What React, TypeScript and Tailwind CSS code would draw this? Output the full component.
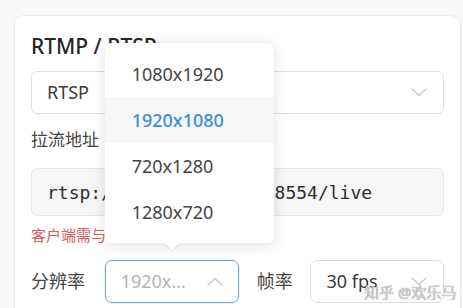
import * as React from 'react';

const font = "font-['Noto_Sans','Noto_Sans_CJK_SC',sans-serif]";

const Chevron: React.FC<{ up?: boolean }> = ({ up }) => (
  <svg width="16" height="9" viewBox="0 0 16 9" fill="none" className="shrink-0">
    <path
      d={up ? 'M1 8L8 1.5L15 8' : 'M1 1L8 7.5L15 1'}
      stroke="#c4c4c4"
      strokeWidth="1.2"
      strokeLinecap="round"
      strokeLinejoin="round"
    />
  </svg>
);

const options = ['1080x1920', '1920x1080', '720x1280', '1280x720'];

const App: React.FC = () => {
  return (
    <div className={`relative w-[463px] h-[308px] overflow-hidden bg-[#f8f8f8] pt-[15px] pl-[14px] pr-[2px] ${font}`}>
      <div className="h-[400px] rounded-[10px] border border-[#ebebeb] bg-white px-[16px] pt-[16px] text-[#333]">
        <h2 className="text-[21px] leading-[28px] font-medium text-[#262626]">RTMP / RTSP</h2>

        <div className="mt-[11px] flex h-[43px] items-center justify-between rounded-[6px] border border-[#dedede] pl-[15px] pr-[16px]">
          <span className="text-[18px] text-[#3a3a3a]">RTSP</span>
          <Chevron />
        </div>

        <div className="mt-[14px] text-[17px] leading-[24px] text-[#444]">拉流地址</div>

        <div className="mt-[16px] flex h-[48px] items-center rounded-[6px] border border-[#e6e6e6] bg-[#f6f6f6] pl-[15px]">
          <span className="font-['DejaVu_Sans_Mono',monospace] text-[18px] text-[#2e2e2e]">rtsp://192.168.1.100:8554/live</span>
        </div>

        <div className="mt-[9px] text-[15px] leading-[21px] text-[#d46060]">客户端需与设备处于同一局域网</div>

        <div className="mt-[14px] flex items-center">
          <span className="w-[74px] text-[18px] text-[#444]">分辨率</span>
          <div className="relative">
            <div className="flex h-[43px] w-[134px] items-center justify-between rounded-[7px] border border-[#79a8c6] pl-[15px] pr-[15px] shadow-[0_0_0_1px_rgba(121,168,198,0.15)]">
              <span className="text-[18px] text-[#b4b4b4]">1920x…</span>
              <Chevron up />
            </div>

            <div className="absolute bottom-[calc(100%+17px)] left-0 z-10 w-[169px] rounded-[6px] bg-white py-[8px] shadow-[0_2px_14px_rgba(0,0,0,0.13)]">
              {options.map((o) => (
                <div
                  key={o}
                  className={`flex h-[46px] items-center pl-[27px] text-[18px] ${
                    o === '1920x1080' ? 'bg-[#f5f6f7] text-[#3d8ed2] font-medium' : 'text-[#444]'
                  }`}
                >
                  {o}
                </div>
              ))}
              <div className="absolute left-[60px] top-full h-0 w-0 border-x-[7px] border-t-[7px] border-x-transparent border-t-white drop-shadow-[0_2px_1px_rgba(0,0,0,0.06)]" />
            </div>
          </div>

          <span className="ml-[18px] w-[54px] text-[18px] text-[#444]">帧率</span>
          <div className="flex h-[43px] w-[134px] items-center justify-between rounded-[7px] border border-[#dedede] pl-[15px] pr-[16px]">
            <span className="text-[18px] text-[#3a3a3a]">30 fps</span>
            <Chevron />
          </div>
        </div>
      </div>

      <div className="absolute left-[364px] top-[281px] text-[15px] text-[#d0d0d0] [text-shadow:0_0_1px_#777]">知乎 @欢乐马</div>
    </div>
  );
};

export default App;
